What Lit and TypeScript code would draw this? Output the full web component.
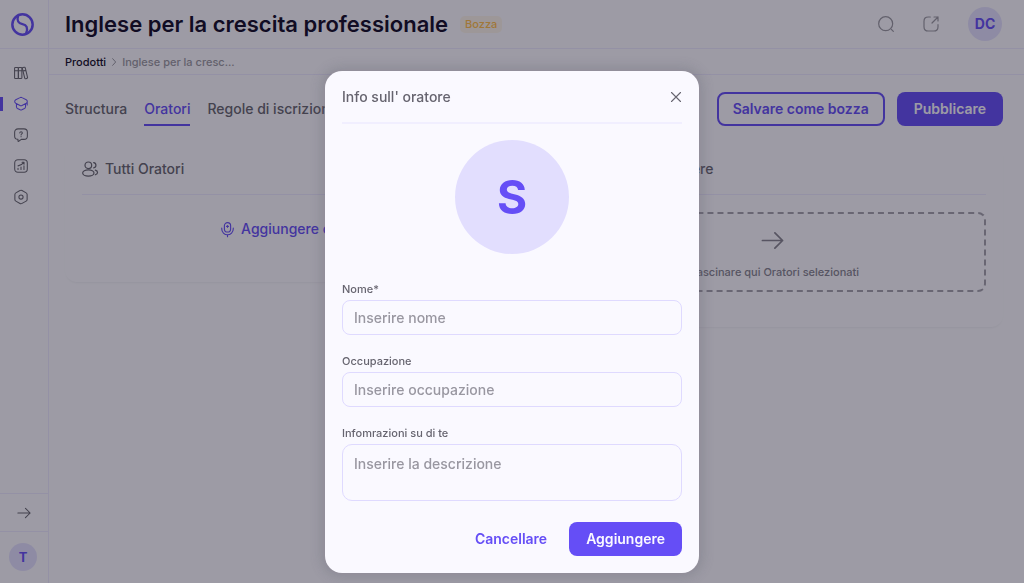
import { LitElement, html, css, svg, nothing } from "lit";
import { customElement, property } from "lit/decorators.js";
import { classMap } from "lit/directives/class-map.js";

const icons: Record<string, unknown> = {
  logo: svg`<g stroke-width="2.600"><circle cx="12" cy="12" r="10.600"/><path d="M7.400 3C5.800 8 7.600 10.800 12 11.700C16.400 12.600 18 15.600 15.800 21" stroke-width="2.400"/></g>`,
  books: svg`<rect x="1" y="2.500" width="6.500" height="19" rx="1.500"/><rect x="7.500" y="2.500" width="6" height="19" rx="1.500"/><path d="M1 8h12.500M15.300 2.700l2.600-.5c.7-.1 1.200.2 1.400.9l3.900 16.600c.2.8-.2 1.400-.9 1.500l-2.400.5c-.8.100-1.300-.2-1.500-.9L14.400 4.300c-.2-.8.2-1.400.9-1.600zM15.300 8.600l5-1.100"/>`,
  cap: svg`<path d="M10.300 1.100L3 4.800C.6 6.200.6 9.400 3 10.800l7.300 3.700c1.100.6 2.300.6 3.400 0l7.300-3.700c2.400-1.400 2.400-4.600 0-6l-7.300-3.700c-1.100-.6-2.300-.6-3.400 0zM4.200 12v4.600c0 1.800 1 3 2.600 3.600l3.800 1.800c1 .4 1.800.4 2.800 0l3.800-1.800c1.600-.6 2.600-1.800 2.600-3.600V12M22.600 8v5.500"/>`,
  help: svg`<path d="M7 1.500h10c3.700 0 5.900 2.200 5.900 5.600v7c0 3.400-2.200 5.400-5.900 5.400h-4.400L8 22.800c-.6.4-1.200 0-1.200-.7v-2.600C3.300 19.300 1.100 17.300 1.100 14.100v-7C1.100 3.700 3.300 1.500 7 1.500z"/><path d="M9.900 8.400c.2-1.200 1-1.900 2.200-1.900 1.300 0 2.200.8 2.200 2 0 1.600-2.200 1.700-2.200 3.400M12.100 14.700v.3"/>`,
  chart: svg`<rect x="1.200" y="1.200" width="21.600" height="21.600" rx="5.500"/><path d="M6.900 18v-2.200M12 18v-4.200M17.100 18v-6.300M6.900 11.800c4-.5 7.300-2.500 10-6M13.800 5.500h3.400v3.300"/>`,
  gear: svg`<path d="M10.200 1L3.200 4.900C2 5.600 1.500 6.500 1.500 7.800v8.400c0 1.300.5 2.200 1.700 2.900l7 3.900c1.200.7 2.400.7 3.600 0l7-3.900c1.200-.7 1.700-1.600 1.700-2.900V7.800c0-1.300-.5-2.200-1.700-2.900L13.800 1c-1.200-.7-2.400-.7-3.600 0z"/><circle cx="12" cy="12" r="3.600"/>`,
  arrow: svg`<path d="M1.500 12h21M14.500 4L22.500 12l-8 8"/>`,
  chevron: svg`<path d="M8 2l9 10-9 10"/>`,
  search: svg`<circle cx="11.500" cy="11.500" r="10.500"/><path d="M20 20l3 3"/>`,
  share: svg`<path d="M11 1.500H8C3.500 1.500 1.500 3.500 1.500 8v8c0 4.500 2 6.500 6.500 6.500h8c4.500 0 6.500-2 6.500-6.500v-3M13.500 10.500L22.500 1.500M16.500 1.500h6v6"/>`,
  users: svg`<circle cx="9.500" cy="6.500" r="5"/><ellipse cx="9.500" cy="18" rx="8.500" ry="4.700"/><path d="M17.500 2.500c2 .3 3.400 1.900 3.400 3.900s-1.400 3.600-3.400 3.800M20 13.600c2 .5 3.300 1.800 3.300 3.500s-1.300 3-3.300 3.600"/>`,
  mic: svg`<rect x="7" y="1" width="10" height="15" rx="5"/><path d="M2.800 9.800V11.200a9.200 9.200 0 0 0 18.400 0V9.800M12 20.500v3M12 5.500v3M10.500 7h3"/>`,
  close: svg`<path d="M3 3l18 18M21 3L3 21"/>`,
};

@customElement("ui-icon")
class UiIcon extends LitElement {
  @property() name = "";
  static styles = css`
    :host { display: inline-flex; flex: none; width: 14px; height: 14px; }
    svg {
      width: 100%; height: 100%; fill: none; stroke: currentColor;
      stroke-width: var(--stroke, 1.8); stroke-linecap: round; stroke-linejoin: round;
      overflow: visible;
    }
  `;
  render() {
    return html`<svg viewBox="0 0 24 24" aria-hidden="true">${icons[this.name] ?? nothing}</svg>`;
  }
}

@customElement("app-root")
class AppRoot extends LitElement {
  static styles = css`
    :host {
      --primary: #654ef6;
      --ink: #110b27;
      --text: #66646f;
      --muted: #9997a1;
      --line: #efedff;
      --tint: #e2defe;
      --edge: #ebe8ff;
      --bg: #faf9ff;
      display: block;
      font-family: Inter, "Open Sans", sans-serif;
      font-size: 14px;
      line-height: 20px;
      font-weight: 500;
      color: var(--text);
      background: var(--bg);
    }
    * { box-sizing: border-box; }
    button, input, textarea { font: inherit; color: inherit; margin: 0; }
    button { cursor: pointer; background: none; border: 0; padding: 0; }
    a { color: inherit; text-decoration: none; }
    h1, h2 { margin: 0; font: inherit; }

    .app { display: grid; grid-template-columns: 49px minmax(0, 1fr); min-height: 100vh; }
    .side { display: flex; flex-direction: column; border-right: 1px solid var(--edge); }
    .logo {
      display: flex; align-items: center; height: 49px; padding-left: 11px;
      color: var(--primary); border-bottom: 1px solid var(--edge);
    }
    .logo ui-icon { width: 23px; height: 23px; }
    .menu { display: flex; flex-direction: column; gap: 11px; padding-top: 14px; flex: 1; }
    .item { display: flex; align-items: center; height: 20px; padding-left: 14px; }
    .item.on { color: var(--primary); background: linear-gradient(var(--primary), var(--primary)) left center / 3px 14px no-repeat; }
    .expand {
      display: flex; align-items: center; height: 38px; padding-left: 17px;
      border-top: 1px solid var(--edge);
    }
    .account { display: flex; padding: 11px 9px 12px; border-top: 1px solid var(--edge); }
    .avatar {
      display: flex; align-items: center; justify-content: center; border-radius: 50%;
      background: var(--tint); color: var(--primary); font-weight: 700; width: 34px; height: 34px;
    }
    .avatar.small { width: 28px; height: 28px; font-size: 13px; }

    .top {
      display: flex; align-items: center; height: 49px; padding: 0 22px 0 16px;
      border-bottom: 1px solid var(--edge);
    }
    h1 { font-size: 22px; line-height: 28px; font-weight: 600; color: var(--ink); white-space: nowrap; }
    .badge {
      margin-left: 12px; padding: 0 5px; height: 17px; line-height: 17px; border-radius: 5px;
      font-size: 11px; background: #fbf2ea; color: #ffbd4a;
    }
    .tools { display: flex; align-items: center; gap: 29px; margin-left: auto; color: var(--muted); }
    .tools ui-icon { width: 16px; height: 16px; }
    .tools button { display: flex; }
    .crumbs {
      display: flex; align-items: center; gap: 4px; height: 26px; padding: 0 16px;
      font-size: 11px; color: var(--muted); border-bottom: 1px solid var(--edge);
    }
    .crumbs a { color: var(--ink); }
    .crumbs ui-icon { width: 8px; height: 8px; --stroke: 3; }

    .body { padding: 17px 21px 17px 16px; }
    .bar { display: flex; align-items: center; justify-content: space-between; }
    .tabs { display: flex; gap: 17px; white-space: nowrap; }
    .tab { padding: 7px 0 5px; border-bottom: 2px solid transparent; }
    .tab.on { color: var(--primary); border-color: var(--primary); }
    .actions { display: flex; gap: 12px; }
    .btn {
      height: 34px; padding: 0 17px; border-radius: 8px; font-weight: 600; white-space: nowrap;
      color: var(--primary);
    }
    .btn.outline { border: 2px solid var(--primary); padding: 0 14px; }
    .btn.fill { background: var(--primary); color: var(--bg); }
    .cards { display: grid; grid-template-columns: 1fr 1fr; align-items: start; gap: 16px; margin-top: 17px; }
    .card { border-radius: 12px; padding: 0 17px; box-shadow: 0 2px 2px -1px #65646f14; }
    .card h2 {
      display: flex; align-items: center; gap: 7px; height: 52px;
      border-bottom: 1px solid var(--edge);
    }
    .card h2 ui-icon { width: 16px; height: 16px; }
    .add {
      display: flex; align-items: center; justify-content: center; gap: 6px; width: 100%;
      height: 87px; padding-bottom: 19px; color: var(--primary); white-space: nowrap;
    }
    .add ui-icon { width: 15px; height: 15px; }
    .drop {
      display: flex; flex-direction: column; align-items: center; gap: 12px;
      margin: 17px 0 35px; padding-top: 15px; height: 80px; font-size: 11px; line-height: 16px;
      border: 2px dashed #a3a1ac; border-radius: 8px; color: #85838f;
    }
    .drop ui-icon { width: 23px; height: 23px; }

    .overlay {
      position: fixed; inset: 0; z-index: 1; padding: 71px 16px 10px; overflow: auto;
      display: flex; justify-content: center; align-items: flex-start;
      background: rgb(18 15 30 / 40%);
    }
    .modal {
      width: 100%; max-width: 374px; padding: 0 17px 17px; border-radius: 17px;
      background: var(--bg); box-shadow: 0 0 10px 6px rgb(101 96 112 / 22%);
    }
    .head {
      display: flex; align-items: center; justify-content: space-between;
      height: 53px; border-bottom: 2px solid #f1efff;
    }
    .head button { display: flex; }
    .head ui-icon { width: 12px; height: 12px; --stroke: 2.200; }
    .photo {
      display: flex; align-items: center; justify-content: center; width: 114px; height: 114px;
      margin: 16px auto 27px; border-radius: 50%; background: var(--tint);
      color: var(--primary); font-size: 46px; font-weight: 700;
    }
    .form { display: flex; flex-direction: column; gap: 18px; }
    .field { display: flex; flex-direction: column; gap: 3px; }
    .field label { font-size: 11px; line-height: 16px; }
    .field input, .field textarea {
      display: block; width: 100%; height: 35px; padding: 0 11px; border: 1px solid #dfdaff;
      border-radius: 8px; background: transparent; outline: none; resize: none;
    }
    .field textarea { height: 57px; padding: 9px 11px; border-radius: 10px; overflow: hidden; }
    ::placeholder { color: var(--muted); opacity: 1; }
    .foot { display: flex; justify-content: flex-end; gap: 5px; margin-top: 3px; }
  `;

  private menu = [
    { icon: "books", label: "Libreria" },
    { icon: "cap", label: "Prodotti" },
    { icon: "help", label: "Domande" },
    { icon: "chart", label: "Statistiche" },
    { icon: "gear", label: "Impostazioni" },
  ];
  private tabs = ["Structura", "Oratori", "Regole di iscrizione"];

  render() {
    return html`
      <div class="app">
        <aside class="side">
          <a class="logo" href="#" aria-label="Home"><ui-icon name="logo"></ui-icon></a>
          <nav class="menu">
            ${this.menu.map((m) => html`
              <a href="#" aria-label=${m.label} class=${classMap({ item: true, on: m.icon === "cap" })}>
                <ui-icon name=${m.icon}></ui-icon>
              </a>`)}
          </nav>
          <button class="expand" aria-label="Espandi"><ui-icon name="arrow"></ui-icon></button>
          <div class="account"><button class="avatar small">T</button></div>
        </aside>
        <main>
          <header class="top">
            <h1>Inglese per la crescita professionale</h1>
            <span class="badge">Bozza</span>
            <div class="tools">
              <button aria-label="Cerca"><ui-icon name="search"></ui-icon></button>
              <button aria-label="Apri"><ui-icon name="share"></ui-icon></button>
              <button class="avatar">DC</button>
            </div>
          </header>
          <nav class="crumbs">
            <a href="#">Prodotti</a><ui-icon name="chevron"></ui-icon><span>Inglese per la cresc...</span>
          </nav>
          <div class="body">
            <div class="bar">
              <nav class="tabs">
                ${this.tabs.map((t) => html`<a href="#" class=${classMap({ tab: true, on: t === "Oratori" })}>${t}</a>`)}
              </nav>
              <div class="actions">
                <button class="btn outline">Salvare come bozza</button>
                <button class="btn fill">Pubblicare</button>
              </div>
            </div>
            <div class="cards">
              <section class="card">
                <h2><ui-icon name="users"></ui-icon>Tutti Oratori</h2>
                <button class="add"><ui-icon name="mic"></ui-icon>Aggiungere oratore</button>
              </section>
              <section class="card">
                <h2><ui-icon name="users"></ui-icon>Oratori da scegliere</h2>
                <div class="drop"><ui-icon name="arrow"></ui-icon>Trascinare qui Oratori selezionati</div>
              </section>
            </div>
          </div>
        </main>
      </div>
      <div class="overlay">
        <div class="modal" role="dialog" aria-modal="true" aria-labelledby="title">
          <div class="head">
            <h2 id="title">Info sull' oratore</h2>
            <button aria-label="Chiudi"><ui-icon name="close"></ui-icon></button>
          </div>
          <div class="photo">S</div>
          <form class="form" @submit=${(e: Event) => e.preventDefault()}>
            <div class="field">
              <label for="name">Nome*</label>
              <input id="name" type="text" placeholder="Inserire nome" />
            </div>
            <div class="field">
              <label for="job">Occupazione</label>
              <input id="job" type="text" placeholder="Inserire occupazione" />
            </div>
            <div class="field">
              <label for="about">Infomrazioni su di te</label>
              <textarea id="about" placeholder="Inserire la descrizione"></textarea>
            </div>
            <div class="foot">
              <button class="btn" type="button">Cancellare</button>
              <button class="btn fill" type="submit">Aggiungere</button>
            </div>
          </form>
        </div>
      </div>
    `;
  }
}
